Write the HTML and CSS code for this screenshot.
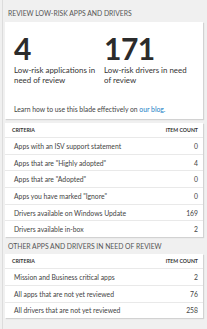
FILE: index.html
```html
<!DOCTYPE html>
<html>
<head>
<meta charset="utf-8">
<link rel="stylesheet" href="styles.css">
</head>
<body>
<div class="page">
  <h2 class="section-title">Review low-risk apps and drivers</h2>
  <div class="card summary">
    <div class="stats">
      <div class="stat">
        <div class="stat-num">4</div>
        <div class="stat-label">Low-risk applications in need of review</div>
      </div>
      <div class="stat">
        <div class="stat-num">171</div>
        <div class="stat-label">Low-risk drivers in need of review</div>
      </div>
    </div>
    <div class="learn">Learn how to use this blade effectively on <a class="link" href="#">our blog.</a></div>
  </div>
  <div class="card table">
    <div class="row head"><span>Criteria</span><span>Item count</span></div>
    <div class="row"><span>Apps with an ISV support statement</span><span>0</span></div>
    <div class="row"><span>Apps that are "Highly adopted"</span><span>4</span></div>
    <div class="row"><span>Apps that are "Adopted"</span><span>0</span></div>
    <div class="row"><span>Apps you have marked "Ignore"</span><span>0</span></div>
    <div class="row"><span>Drivers available on Windows Update</span><span>169</span></div>
    <div class="row"><span>Drivers available in-box</span><span>2</span></div>
  </div>
  <h2 class="section-title second">Other apps and drivers in need of review</h2>
  <div class="card table">
    <div class="row head"><span>Criteria</span><span>Item count</span></div>
    <div class="row"><span>Mission and Business critical apps</span><span>2</span></div>
    <div class="row"><span>All apps that are not yet reviewed</span><span>76</span></div>
    <div class="row"><span>All drivers that are not yet reviewed</span><span>258</span></div>
  </div>
</div>
</body>
</html>
```
FILE: styles.css
```css
html, body {
  margin: 0;
  padding: 0;
}
body {
  background: #f0f0f0;
  font-family: Lato, "Open Sans", sans-serif;
  color: #444;
  width: 207px;
  height: 329px;
  overflow: hidden;
}
.page {
  margin-left: 2px;
  border-left: 1px solid #dcdcdc;
  padding: 0 4px 0 2px;
  min-height: 329px;
}
.section-title {
  margin: 0;
  height: 22px;
  line-height: 26px;
  font-size: 6.8px;
  font-weight: 400;
  text-transform: uppercase;
  color: #555;
  padding-left: 3px;
}
.section-title.second {
  height: 17px;
  line-height: 18px;
}
.card {
  background: #fff;
  box-shadow: 1px 1px 1px rgba(0, 0, 0, 0.12);
}
.summary {
  height: 97px;
  padding: 11px 9px 0 9px;
  box-sizing: border-box;
  display: flex;
  flex-direction: column;
  margin-bottom: 4px;
}
.stats {
  display: flex;
}
.stat {
  width: 93px;
}
.stat-num {
  font-size: 30px;
  line-height: 30px;
  font-weight: 700;
  color: #2b2b2b;
  letter-spacing: -0.5px;
}
.stat-label {
  font-size: 7.9px;
  line-height: 10px;
  color: #333;
  margin-top: 2px;
}
.learn {
  margin-top: auto;
  margin-bottom: 6px;
  font-size: 6.8px;
  line-height: 8px;
  color: #444;
}
.link {
  color: #1a7ec6;
  text-decoration: none;
}
.row {
  display: flex;
  justify-content: space-between;
  align-items: center;
  height: 15.7px;
  padding: 0 5px 0 9px;
  font-size: 6.8px;
  color: #444;
  border-top: 1px solid #e9e9e9;
}
.row.head {
  height: 14px;
  border-top: none;
  font-size: 5.2px;
  font-weight: 700;
  text-transform: uppercase;
  color: #333;
  padding-left: 7px;
}
```
